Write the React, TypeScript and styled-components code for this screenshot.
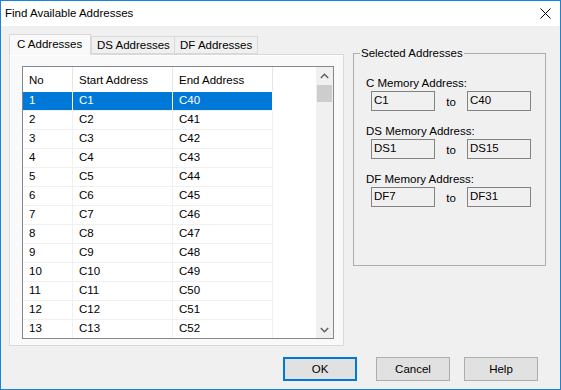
import * as React from 'react';
import styled, { createGlobalStyle } from 'styled-components';

const GlobalStyle = createGlobalStyle`
   html, body {
      margin: 0;
      padding: 0;
      background: #f0f0f0;
   }
   body {
      font-family: 'Liberation Sans', Arial, sans-serif;
      font-size: 11.5px;
      color: #000;
   }
   * {
      box-sizing: border-box;
   }
`;

const rows = Array.from({ length: 13 }, (_, i) => ({
   no: i + 1,
   start: `C${i + 1}`,
   end: `C${i + 40}`,
}));

const sections = [
   { label: 'C Memory Address:', from: 'C1', to: 'C40' },
   { label: 'DS Memory Address:', from: 'DS1', to: 'DS15' },
   { label: 'DF Memory Address:', from: 'DF7', to: 'DF31' },
];

export default function App() {
   return (
      <>
         <GlobalStyle />
         <Window>
            <TitleBar>
               <Title>Find Available Addresses</Title>
               <CloseButton aria-label="Close">
                  <svg width="11" height="11" viewBox="0 0 11 11">
                     <path d="M0.5 0.5 L10.5 10.5 M10.5 0.5 L0.5 10.5" stroke="#000" strokeWidth="1" fill="none" />
                  </svg>
               </CloseButton>
            </TitleBar>
            <Content>
               <Main>
                  <TabControl>
                     <TabStrip>
                        <Tab active width={82}>C Addresses</Tab>
                        <Tab width={84}>DS Addresses</Tab>
                        <Tab width={84}>DF Addresses</Tab>
                     </TabStrip>
                     <TabPanel>
                        <ListView>
                           <ListBody>
                              <HeaderRow>
                                 <HeaderCell width={50}>No</HeaderCell>
                                 <HeaderCell width={100}>Start Address</HeaderCell>
                                 <HeaderCell width={100}>End Address</HeaderCell>
                              </HeaderRow>
                              {rows.map((r, i) => (
                                 <Row key={r.no}>
                                    <Cell width={50} selected={i === 0}>{r.no}</Cell>
                                    <Cell width={100} selected={i === 0}>{r.start}</Cell>
                                    <Cell width={100} selected={i === 0}>{r.end}</Cell>
                                 </Row>
                              ))}
                           </ListBody>
                           <ScrollBar>
                              <ArrowBox>
                                 <svg width="9" height="6" viewBox="0 0 9 6">
                                    <path d="M0.8 5 L4.5 1.3 L8.2 5" stroke="#606060" strokeWidth="1.5" fill="none" />
                                 </svg>
                              </ArrowBox>
                              <Thumb />
                              <Track />
                              <ArrowBox>
                                 <svg width="9" height="6" viewBox="0 0 9 6">
                                    <path d="M0.8 1 L4.5 4.7 L8.2 1" stroke="#606060" strokeWidth="1.5" fill="none" />
                                 </svg>
                              </ArrowBox>
                           </ScrollBar>
                        </ListView>
                     </TabPanel>
                  </TabControl>
                  <GroupBox>
                     <Legend>Selected Addresses</Legend>
                     {sections.map((s) => (
                        <Section key={s.label}>
                           <FieldLabel>{s.label}</FieldLabel>
                           <FieldRow>
                              <AddressBox>{s.from}</AddressBox>
                              <ToText>to</ToText>
                              <AddressBox>{s.to}</AddressBox>
                           </FieldRow>
                        </Section>
                     ))}
                  </GroupBox>
               </Main>
               <Footer>
                  <Button primary>OK</Button>
                  <Button>Cancel</Button>
                  <Button>Help</Button>
               </Footer>
            </Content>
         </Window>
      </>
   );
}

const Window = styled.div`
   width: 561px;
   height: 390px;
   border: 1px solid #1883d7;
   display: flex;
   flex-direction: column;
   background: #f0f0f0;
   overflow: hidden;
`;

const TitleBar = styled.div`
   height: 25px;
   flex: none;
   background: #fff;
   display: flex;
   align-items: center;
   justify-content: space-between;
   padding: 0 9px 0 4px;
`;

const Title = styled.span`
   font-size: 11.5px;
   padding-bottom: 1px;
`;

const CloseButton = styled.div`
   display: flex;
   align-items: center;
   padding-bottom: 1px;
`;

const Content = styled.div`
   flex: 1;
   display: flex;
   flex-direction: column;
   padding: 8px 0 0 8px;
`;

const Main = styled.div`
   display: flex;
   align-items: flex-start;
`;

const TabControl = styled.div`
   width: 335px;
   display: flex;
   flex-direction: column;
`;

const TabStrip = styled.div`
   display: flex;
   align-items: flex-end;
   height: 20px;
   position: relative;
   z-index: 1;
`;

const Tab = styled.div<{ active?: boolean; width: number }>`
   width: ${(p) => p.width}px;
   height: ${(p) => (p.active ? 21 : 18)}px;
   margin-bottom: ${(p) => (p.active ? -1 : 0)}px;
   padding: ${(p) => (p.active ? '2px 0 0 7px' : '1px 0 0 5px')};
   background: ${(p) => (p.active ? '#f9f9f9' : '#f0f0f0')};
   border: 1px solid #d9d9d9;
   border-bottom: ${(p) => (p.active ? 'none' : '1px solid #d9d9d9')};
   margin-right: ${(p) => (p.active ? 0 : -1)}px;
   line-height: 14px;
   white-space: nowrap;
   overflow: hidden;
`;

const TabPanel = styled.div`
   height: 292px;
   border: 1px solid #d9d9d9;
   background: #f9f9f9;
   box-shadow: inset 1px 1px 0 #fff;
   padding: 11px 0 0 12px;
`;

const ListView = styled.div`
   width: 312px;
   height: 273px;
   border: 1px solid #828790;
   background: #fff;
   display: flex;
   overflow: hidden;
`;

const ListBody = styled.div`
   flex: 1;
   display: flex;
   flex-direction: column;
   overflow: hidden;
`;

const HeaderRow = styled.div`
   display: flex;
   height: 25px;
   flex: none;
   border-bottom: 1px solid #fff;
`;

const HeaderCell = styled.div<{ width: number }>`
   width: ${(p) => p.width}px;
   border-right: 1px solid #e5e5e5;
   padding: 3px 0 0 6px;
   line-height: 20px;
   white-space: nowrap;
`;

const Row = styled.div`
   display: flex;
   flex: none;
   height: 19px;
`;

const Cell = styled.div<{ width: number; selected?: boolean }>`
   width: ${(p) => p.width}px;
   height: 19px;
   padding: 0 0 0 6px;
   line-height: 16px;
   background: ${(p) => (p.selected ? '#0078d7' : '#fff')};
   color: ${(p) => (p.selected ? '#fff' : '#000')};
   border-right: 1px solid ${(p) => (p.selected ? '#fff' : '#f0f0f0')};
   border-bottom: 1px solid #f0f0f0;
   white-space: nowrap;
`;

const ScrollBar = styled.div`
   width: 17px;
   flex: none;
   background: #f0f0f0;
   display: flex;
   flex-direction: column;
`;

const ArrowBox = styled.div`
   height: 17px;
   flex: none;
   display: flex;
   align-items: center;
   justify-content: center;
`;

const Thumb = styled.div`
   height: 17px;
   margin: 1px 1px 0 1px;
   flex: none;
   background: #cdcdcd;
`;

const Track = styled.div`
   flex: 1;
`;

const GroupBox = styled.fieldset`
   width: 193px;
   height: 219px;
   margin: 13px 0 0 9px;
   padding: 17px 0 0 12px;
   border: 1px solid #adadad;
   min-width: 0;
`;

const Legend = styled.legend`
   padding: 0 1px;
   margin-left: -6px;
   line-height: 13px;
`;

const Section = styled.div`
   display: flex;
   flex-direction: column;
   margin-bottom: 14px;
`;

const FieldLabel = styled.div`
   line-height: 13px;
   margin-bottom: 1px;
   white-space: nowrap;
`;

const FieldRow = styled.div`
   display: flex;
   align-items: center;
   padding-left: 5px;
`;

const AddressBox = styled.div`
   width: 64px;
   height: 20px;
   border: 1px solid #838383;
   background: #f0f0f0;
   padding-left: 2px;
   line-height: 17px;
`;

const ToText = styled.span`
   width: 32px;
   text-align: center;
   padding-top: 2px;
`;

const Footer = styled.div`
   display: flex;
   margin-top: 11px;
   padding-left: 274px;
   gap: 14px;
`;

const Button = styled.div<{ primary?: boolean }>`
   width: 74px;
   height: 24px;
   margin-right: ${(p) => (p.primary ? 5 : 0)}px;
   background: #e1e1e1;
   border: ${(p) => (p.primary ? '2px solid #0078d7' : '1px solid #adadad')};
   display: flex;
   align-items: center;
   justify-content: center;
   padding-bottom: 1px;
`;
